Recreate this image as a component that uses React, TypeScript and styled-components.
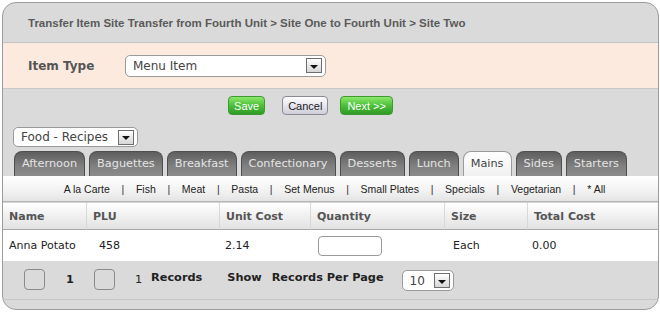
import React from 'react';
import styled, { createGlobalStyle } from 'styled-components';

const GlobalStyle = createGlobalStyle`
  html, body {
    margin: 0;
    padding: 0;
    background: #ffffff;
  }
  body {
    font-family: 'DejaVu Sans', Verdana, sans-serif;
  }
`;

const Panel = styled.div`
  box-sizing: border-box;
  margin: 2px 0 0 2px;
  width: 657px;
  height: 308px;
  border: 1px solid #9c9c9c;
  border-radius: 14px;
  background: #dadada;
  overflow: hidden;
  display: flex;
  flex-direction: column;
`;

const Title = styled.div`
  height: 39px;
  flex-shrink: 0;
  display: flex;
  align-items: center;
  padding-left: 25px;
  border-bottom: 1px solid #c3c3c3;
  font-family: 'Liberation Sans', Arial, sans-serif;
  font-size: 11.5px;
  font-weight: bold;
  color: #5a5a5a;
`;

const TypeBand = styled.div`
  height: 45px;
  flex-shrink: 0;
  display: flex;
  align-items: center;
  padding-left: 25px;
  background: #fdeadf;
  border-bottom: 1px solid #c8c8c8;
`;

const Label = styled.label`
  width: 97px;
  font-size: 12px;
  font-weight: bold;
  color: #555;
`;

const SelectBox = styled.div<{ $w: number; $h: number }>`
  box-sizing: border-box;
  width: ${p => p.$w}px;
  height: ${p => p.$h}px;
  display: flex;
  align-items: center;
  justify-content: space-between;
  padding: 0 3px 0 7px;
  background: #fff;
  border: 1px solid #9a9a9a;
  border-radius: 5px;
  font-size: 12px;
  color: #444;
`;

const Arrow = styled.span`
  box-sizing: border-box;
  width: 16px;
  height: 15px;
  display: flex;
  align-items: center;
  justify-content: center;
  border: 1px solid #6e6e6e;
  background: linear-gradient(#ffffff, #d6d6d6);
  &::after {
    content: '';
    margin-top: 2px;
    border-left: 4px solid transparent;
    border-right: 4px solid transparent;
    border-top: 4px solid #111;
  }
`;

const ButtonRow = styled.div`
  height: 33px;
  flex-shrink: 0;
  display: flex;
  align-items: center;
  justify-content: center;
  padding-right: 40px;
`;

const Button = styled.button<{ $kind: 'go' | 'plain'; $gap?: number; $pad?: number }>`
  box-sizing: border-box;
  height: 19px;
  margin-left: ${p => p.$gap ?? 0}px;
  padding: 0 ${p => p.$pad ?? 5}px;
  border-radius: 4px;
  font-family: 'Liberation Sans', Arial, sans-serif;
  font-size: 11px;
  cursor: pointer;
  ${p =>
    p.$kind === 'go'
      ? `
    color: #fff;
    border: 1px solid #3c9a2e;
    background: linear-gradient(#8de86a, #4cc03a 50%, #2f9a24);
  `
      : `
    color: #222;
    border: 1px solid #8a8a94;
    background: linear-gradient(#ffffff, #e6e6ee 50%, #cfcfda);
  `}
`;

const FilterRow = styled.div`
  flex-shrink: 0;
  padding: 5px 0 0 10px;
`;

const TabStrip = styled.div`
  flex-shrink: 0;
  display: flex;
  align-items: flex-end;
  gap: 4px;
  padding: 4px 0 0 11px;
  height: 25px;
`;

const Tab = styled.div<{ $active?: boolean }>`
  box-sizing: border-box;
  height: 25px;
  display: flex;
  align-items: center;
  padding: 0 7px 2px 7px;
  border: 1px solid ${p => (p.$active ? '#9a9a9a' : '#4e4e4e')};
  border-bottom: none;
  border-radius: 8px 8px 0 0;
  font-size: 11.3px;
  color: ${p => (p.$active ? '#444' : '#e4e4e4')};
  background: ${p =>
    p.$active ? 'linear-gradient(#ffffff, #f0f0f0)' : 'linear-gradient(#5e5e5e, #808080 60%, #8c8c8c)'};
`;

const SubMenu = styled.div`
  height: 25px;
  flex-shrink: 0;
  display: flex;
  align-items: center;
  justify-content: center;
  padding-left: 8px;
  background: linear-gradient(#ffffff, #f2f2f2 60%, #e4e4e4);
  border-bottom: 1px solid #b4b4b4;
  font-family: 'Liberation Sans', Arial, sans-serif;
  font-size: 10.5px;
  color: #222;
`;

const Sep = styled.span`
  margin: 0 11.7px;
  color: #333;
`;

const Grid = styled.div`
  flex-shrink: 0;
  display: grid;
  grid-template-columns: 83px 133px 91px 134px 83px 1fr;
  background: #fff;
  border-top: 1px solid #d4d4d4;
`;

const HeadCell = styled.div`
  height: 26px;
  display: flex;
  align-items: center;
  padding-left: 6px;
  background: linear-gradient(#ffffff, #f0f0f0 50%, #e2e2e2);
  border-bottom: 1px solid #a8a8a8;
  border-left: 1px solid #d8d8d8;
  font-size: 11px;
  font-weight: bold;
  color: #555;
  &:first-child {
    border-left: none;
  }
`;

const Cell = styled.div<{ $pad?: number }>`
  height: 31px;
  display: flex;
  align-items: center;
  padding-left: ${p => p.$pad ?? 6}px;
  font-size: 11px;
  color: #222;
`;

const QtyInput = styled.input`
  box-sizing: border-box;
  width: 64px;
  height: 20px;
  border: 1px solid #9a9a9a;
  border-radius: 4px;
  background: #fff;
`;

const Footer = styled.div`
  height: 36px;
  flex-shrink: 0;
  display: flex;
  align-items: center;
  padding: 0 0 2px 21px;
  border-bottom: 1px solid #c6c6c6;
  font-size: 11.3px;
  font-weight: bold;
  color: #222;
`;

const PageBox = styled.span<{ $gap?: number }>`
  box-sizing: border-box;
  width: 21px;
  height: 21px;
  margin-left: ${p => p.$gap ?? 0}px;
  border: 1px solid #8a8a8a;
  border-radius: 4px;
`;

const Num = styled.span<{ $light?: boolean; $gap: number }>`
  margin-left: ${p => p.$gap}px;
  font-weight: ${p => (p.$light ? 'normal' : 'bold')};
`;

const FooterText = styled.span<{ $gap: number }>`
  margin-left: ${p => p.$gap}px;
  margin-bottom: 3px;
`;

const FooterSelect = styled.div`
  margin-left: 18px;
  margin-top: 3px;
  font-weight: normal;
`;

const tabs = ['Afternoon', 'Baguettes', 'Breakfast', 'Confectionary', 'Desserts', 'Lunch', 'Mains', 'Sides', 'Starters'];
const categories = ['A la Carte', 'Fish', 'Meat', 'Pasta', 'Set Menus', 'Small Plates', 'Specials', 'Vegetarian', '* All'];
const columns = ['Name', 'PLU', 'Unit Cost', 'Quantity', 'Size', 'Total Cost'];

export default function App() {
  return (
    <>
      <GlobalStyle />
      <Panel>
        <Title>Transfer Item Site Transfer from Fourth Unit &gt; Site One to Fourth Unit &gt; Site Two</Title>
        <TypeBand>
          <Label>Item Type</Label>
          <SelectBox $w={201} $h={22}>
            Menu Item
            <Arrow />
          </SelectBox>
        </TypeBand>
        <ButtonRow>
          <Button $kind="go" $pad={5}>Save</Button>
          <Button $kind="plain" $gap={17}>Cancel</Button>
          <Button $kind="go" $gap={12} $pad={6}>Next &gt;&gt;</Button>
        </ButtonRow>
        <FilterRow>
          <SelectBox $w={125} $h={20}>
            Food - Recipes
            <Arrow />
          </SelectBox>
        </FilterRow>
        <TabStrip>
          {tabs.map(t => (
            <Tab key={t} $active={t === 'Mains'}>
              {t}
            </Tab>
          ))}
        </TabStrip>
        <SubMenu>
          {categories.map((c, i) => (
            <React.Fragment key={c}>
              {i > 0 && <Sep>|</Sep>}
              <span>{c}</span>
            </React.Fragment>
          ))}
        </SubMenu>
        <Grid>
          {columns.map(c => (
            <HeadCell key={c}>{c}</HeadCell>
          ))}
          <Cell>Anna Potato</Cell>
          <Cell $pad={13}>458</Cell>
          <Cell>2.14</Cell>
          <Cell $pad={8}>
            <QtyInput />
          </Cell>
          <Cell $pad={9}>Each</Cell>
          <Cell $pad={5}>0.00</Cell>
        </Grid>
        <Footer>
          <PageBox />
          <Num $gap={21}>1</Num>
          <PageBox $gap={20} />
          <Num $gap={20} $light>
            1
          </Num>
          <FooterText $gap={9}>Records</FooterText>
          <FooterText $gap={25}>Show</FooterText>
          <FooterText $gap={10}>Records Per Page</FooterText>
          <FooterSelect>
            <SelectBox $w={52} $h={21}>
              10
              <Arrow />
            </SelectBox>
          </FooterSelect>
        </Footer>
      </Panel>
    </>
  );
}
